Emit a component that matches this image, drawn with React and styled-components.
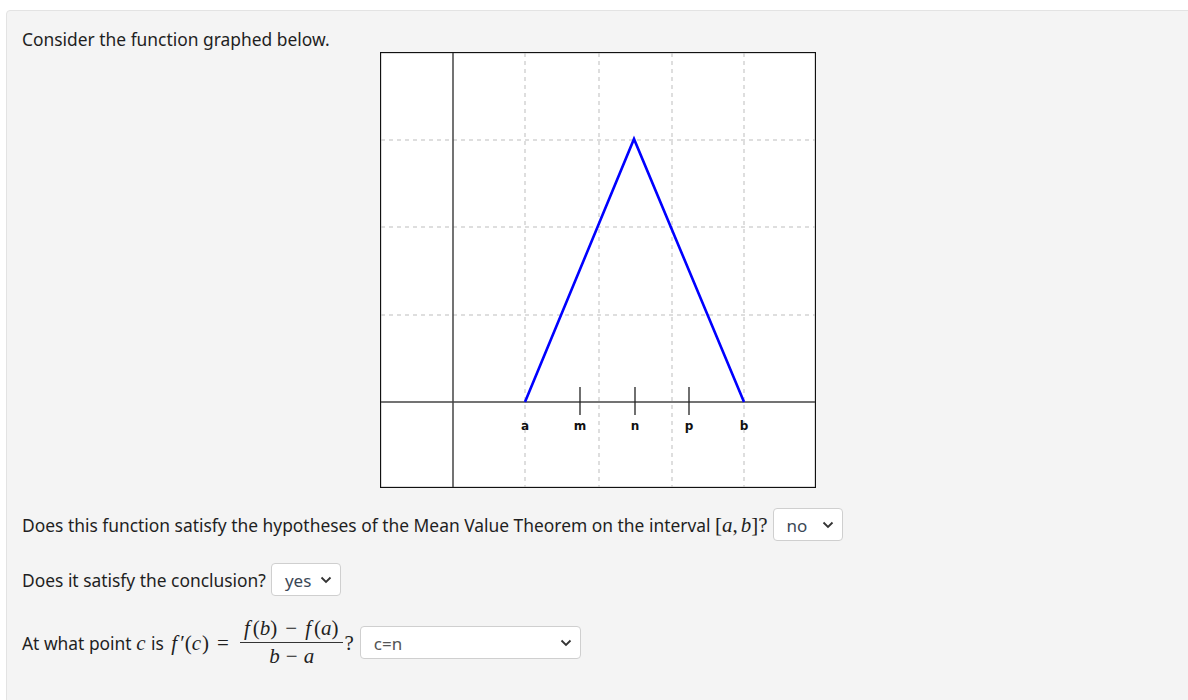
import React from "react";
import styled, { createGlobalStyle } from "styled-components";

const GlobalStyle = createGlobalStyle`
  body {
    margin: 0;
    background: #ffffff;
    font-family: "Noto Sans", "Open Sans", sans-serif;
    color: #1f1f1f;
  }
`;

const Panel = styled.div`
  margin: 10px 0 0 6px;
  width: 1200px;
  height: 700px;
  box-sizing: border-box;
  background: #f4f4f4;
  border: 1px solid #e3e3e3;
  border-radius: 4px;
  padding: 15px 32px 0 15px;
  font-size: 17.4px;
`;

const Para = styled.p`
  margin: 0;
  line-height: 26px;
  display: flex;
  align-items: center;
  margin-top: ${(p) => p.$top || 0}px;
`;

const GraphRow = styled.div`
  display: flex;
  justify-content: center;
`;

const MathText = styled.span`
  font-family: "Liberation Serif", "DejaVu Serif", serif;
  font-size: 21px;
  white-space: nowrap;
  margin: 0 ${(p) => p.$space || 0}px;
`;

const V = styled.i`
  font-style: italic;
  margin-right: ${(p) => p.$r || 0}px;
  margin-left: ${(p) => p.$l || 0}px;
`;

const Op = styled.span`
  margin: 0 ${(p) => p.$m || 4}px;
`;

const Frac = styled.span`
  display: inline-flex;
  flex-direction: column;
  align-items: center;
  font-family: "Liberation Serif", "DejaVu Serif", serif;
  font-size: 21px;
  margin: 0 1px 0 0;
  line-height: 25px;
  white-space: nowrap;
`;

const FracTop = styled.span`
  padding: 0 5px 1px 4px;
  border-bottom: 1.5px solid #333;
`;

const FracBottom = styled.span`
  padding-top: 1px;
`;

const SelectBox = styled.div`
  display: inline-flex;
  align-items: center;
  justify-content: space-between;
  box-sizing: border-box;
  width: ${(p) => p.$w}px;
  height: 33px;
  margin-left: ${(p) => p.$ml || 5}px;
  padding: 3px 8px 0 13px;
  background: #fff;
  border: 1px solid #cfcfcf;
  border-radius: 4px;
  color: ${(p) => p.$color || "#3b4756"};
  font-size: 17px;
`;

const Chevron = () => (
  <svg width="12" height="8" viewBox="0 0 12 8" style={{ marginTop: -3 }}>
    <path d="M1.5 1.5 L6 6 L10.5 1.5" fill="none" stroke="#333" strokeWidth="1.8" />
  </svg>
);

const Select = ({ value, w, color, ml }) => (
  <SelectBox $w={w} $color={color} $ml={ml}>
    <span>{value}</span>
    <Chevron />
  </SelectBox>
);

const Graph = () => {
  const vx = [145, 219, 292, 364];
  const hy = [88, 175, 263];
  const ticks = [200, 255, 309];
  const labels = [
    ["a", 145],
    ["m", 200],
    ["n", 255],
    ["p", 309],
    ["b", 364],
  ];
  return (
    <svg width="436" height="436" viewBox="0 0 436 436">
      <rect x="0.5" y="0.5" width="435" height="435" fill="#fff" stroke="#111" strokeWidth="1.3" />
      {vx.map((x) => (
        <line key={x} x1={x} y1="1" x2={x} y2="435" stroke="#bdbdbd" strokeDasharray="4 4" />
      ))}
      {hy.map((y) => (
        <line key={y} x1="1" y1={y} x2="435" y2={y} stroke="#bdbdbd" strokeDasharray="4 4" />
      ))}
      <line x1="73" y1="1" x2="73" y2="435" stroke="#444" strokeWidth="1.5" />
      <line x1="1" y1="350" x2="435" y2="350" stroke="#444" strokeWidth="1.5" />
      {ticks.map((x) => (
        <line key={x} x1={x} y1="335" x2={x} y2="363" stroke="#222" strokeWidth="1.3" />
      ))}
      <polyline points="145,350 254,87 364,350" fill="none" stroke="#0000ff" strokeWidth="2.6" />
      {labels.map(([t, x]) => (
        <text
          key={t}
          x={x}
          y="378"
          textAnchor="middle"
          fontFamily="DejaVu Sans, sans-serif"
          fontWeight="bold"
          fontSize="12"
          fill="#111"
        >
          {t}
        </text>
      ))}
    </svg>
  );
};

export default function App() {
  return (
    <>
      <GlobalStyle />
      <Panel>
        <Para>Consider the function graphed below.</Para>
        <GraphRow>
          <Graph />
        </GraphRow>
        <Para $top={20}>
          Does this function satisfy the hypotheses of the Mean Value Theorem on the interval&nbsp;
          <MathText>
            [<V>a</V>,<V $l={3}>b</V>]?
          </MathText>
          <Select value="no" w={70} />
        </Para>
        <Para $top={22}>
          Does it satisfy the conclusion?
          <Select value="yes" w={70} />
        </Para>
        <Para $top={20}>
          At what point&nbsp;
          <MathText>
            <V $r={1}>c</V>
          </MathText>
          &nbsp;is&nbsp;
          <MathText $space={3}>
            <V $r={3}>f</V>′(<V $r={1}>c</V>)<Op $m={8}>=</Op>
          </MathText>
          <Frac>
            <FracTop>
              <V $r={3}>f</V>(<V>b</V>)<Op $m={8}>−</Op>
              <V $r={3}>f</V>(<V>a</V>)
            </FracTop>
            <FracBottom>
              <V>b</V>
              <Op $m={6}>−</Op>
              <V>a</V>
            </FracBottom>
          </Frac>
          <MathText>?</MathText>
          <Select value="c=n" w={221} color="#555" ml={6} />
        </Para>
      </Panel>
    </>
  );
}
